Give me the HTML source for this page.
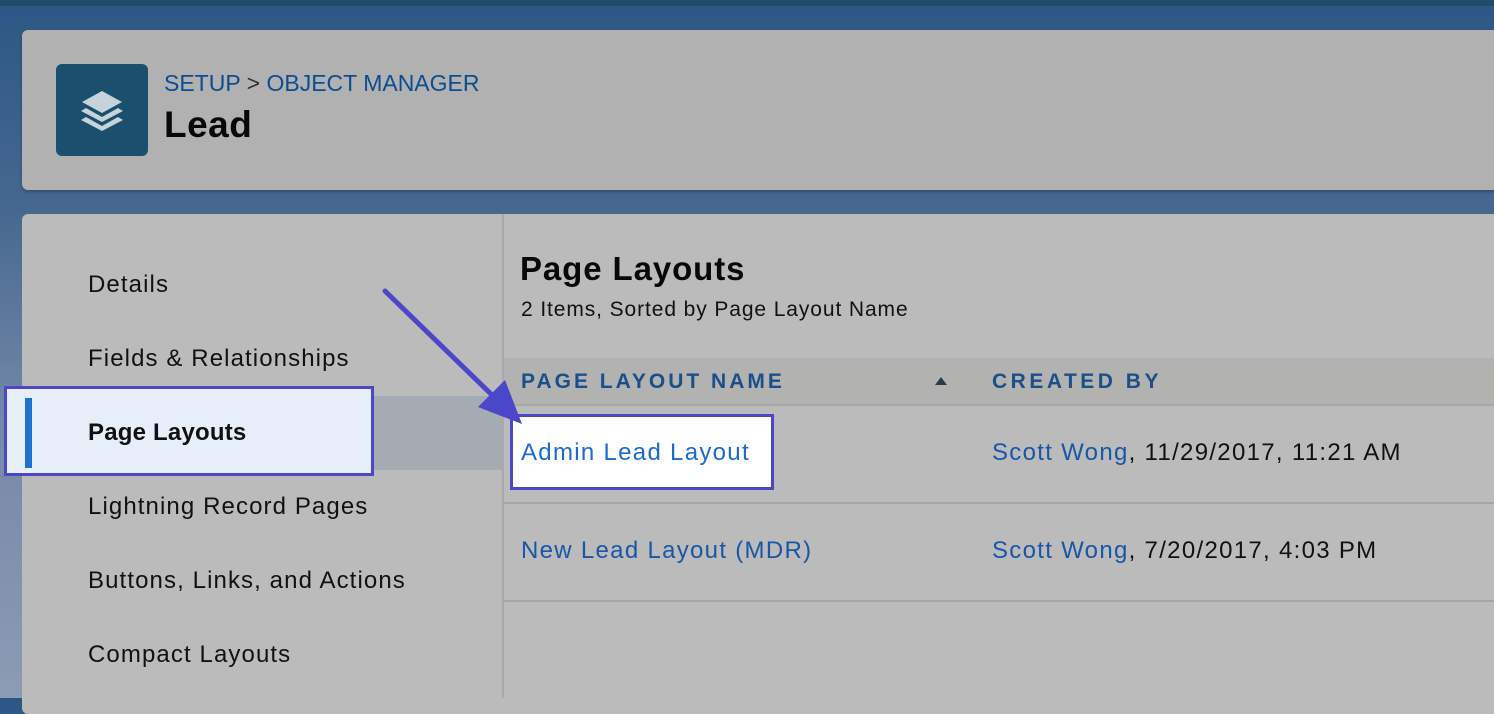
<!DOCTYPE html>
<html><head><style>
*{margin:0;padding:0;box-sizing:border-box}
body{width:1494px;height:698px;overflow:hidden;position:relative;font-family:"Liberation Sans",sans-serif;background:linear-gradient(180deg,#2c5784 0%,#46688f 30%,#7388a8 60%,#8d9bb4 100%)}
.abs{position:absolute;white-space:nowrap}
.top{left:0;top:0;width:1494px;height:6px;background:#1d4b6a}
.hdr{left:22px;top:30px;width:1490px;height:160px;background:#b1b1b1;border-radius:6px;box-shadow:0 2px 3px rgba(0,0,0,.25)}
.icon{left:56px;top:64px;width:92px;height:92px;background:#1b4f6e;border-radius:6px}
.main{left:22px;top:214px;width:1490px;height:500px;background:#bbbbbb;border-radius:6px}
.nav{font-size:24px;color:#111;left:88px;letter-spacing:1.1px}
.link{color:#1856a8}
.th{font-size:21px;font-weight:bold;letter-spacing:3px;color:#1a4f8a}
.line{height:2px;background:#a6a6a6}
.row{font-size:24px;color:#111;letter-spacing:1.3px}
</style></head><body>
<div class="abs top"></div>
<div class="abs hdr"></div>
<div class="abs icon"><svg width="92" height="92" viewBox="0 0 92 92"><g fill="#c7d3da"><path d="M46 27 L66 38 L46 49 L26 38Z"/><path d="M30 44 L46 53 L62 44 L67 47 L46 58 L25 47Z"/><path d="M30 53 L46 62 L62 53 L67 56 L46 67 L25 56Z"/></g></svg></div>
<div class="abs" style="left:164px;top:70px;font-size:23px;color:#0b4d91">SETUP <span style="color:#333">&gt;</span> OBJECT MANAGER</div>
<div class="abs" style="left:164px;top:104px;font-size:37px;font-weight:bold;color:#080808;letter-spacing:.5px">Lead</div>
<div class="abs main"></div>
<div class="abs" style="left:502px;top:214px;width:2px;height:484px;background:#a9a9a9"></div>
<div class="abs" style="left:24px;top:396px;width:478px;height:74px;background:#a4abb3"></div>
<div class="abs" style="left:4px;top:386px;width:370px;height:90px;border:3px solid #4a48c8;background:#e6eff8"></div>
<div class="abs" style="left:25px;top:398px;width:7px;height:70px;background:#1f6fd0"></div>
<div class="abs nav" style="top:271px">Details</div>
<div class="abs nav" style="top:345px">Fields &amp; Relationships</div>
<div class="abs nav" style="top:419px;font-weight:bold;letter-spacing:.2px">Page Layouts</div>
<div class="abs nav" style="top:493px">Lightning Record Pages</div>
<div class="abs nav" style="top:567px">Buttons, Links, and Actions</div>
<div class="abs nav" style="top:641px">Compact Layouts</div>
<div class="abs" style="left:520px;top:250px;font-size:33px;font-weight:bold;color:#080808;letter-spacing:.9px">Page Layouts</div>
<div class="abs" style="left:521px;top:298px;font-size:21px;color:#111;letter-spacing:.9px">2 Items, Sorted by Page Layout Name</div>
<div class="abs" style="left:504px;top:358px;width:990px;height:47px;background:#b2b2b0"></div>
<div class="abs th" style="left:521px;top:370px">PAGE LAYOUT NAME</div>
<div class="abs" style="left:935px;top:377px;width:0;height:0;border-left:6px solid transparent;border-right:6px solid transparent;border-bottom:8px solid #2a3a4a"></div>
<div class="abs th" style="left:992px;top:370px;letter-spacing:3.5px">CREATED BY</div>
<div class="abs line" style="left:504px;top:404px;width:990px"></div>
<div class="abs line" style="left:504px;top:502px;width:990px"></div>
<div class="abs line" style="left:504px;top:600px;width:990px"></div>
<div class="abs" style="left:510px;top:414px;width:264px;height:76px;border:3px solid #4a48c8;background:#fff"></div>
<div class="abs row" style="left:521px;top:439px;color:#1b6ad0;letter-spacing:1.3px">Admin Lead Layout</div>
<div class="abs row" style="left:992px;top:439px"><span class="link">Scott Wong</span>, 11/29/2017, 11:21 AM</div>
<div class="abs row" style="left:521px;top:537px"><span class="link">New Lead Layout (MDR)</span></div>
<div class="abs row" style="left:992px;top:537px"><span class="link">Scott Wong</span>, 7/20/2017, 4:03 PM</div>
<svg class="abs" style="left:0;top:0" width="1494" height="698"><line x1="385" y1="291" x2="492" y2="395" stroke="#4a48c8" stroke-width="5" stroke-linecap="round"/><path d="M522 424 L478 407 L505 380Z" fill="#4a48c8"/></svg>
</body></html>
